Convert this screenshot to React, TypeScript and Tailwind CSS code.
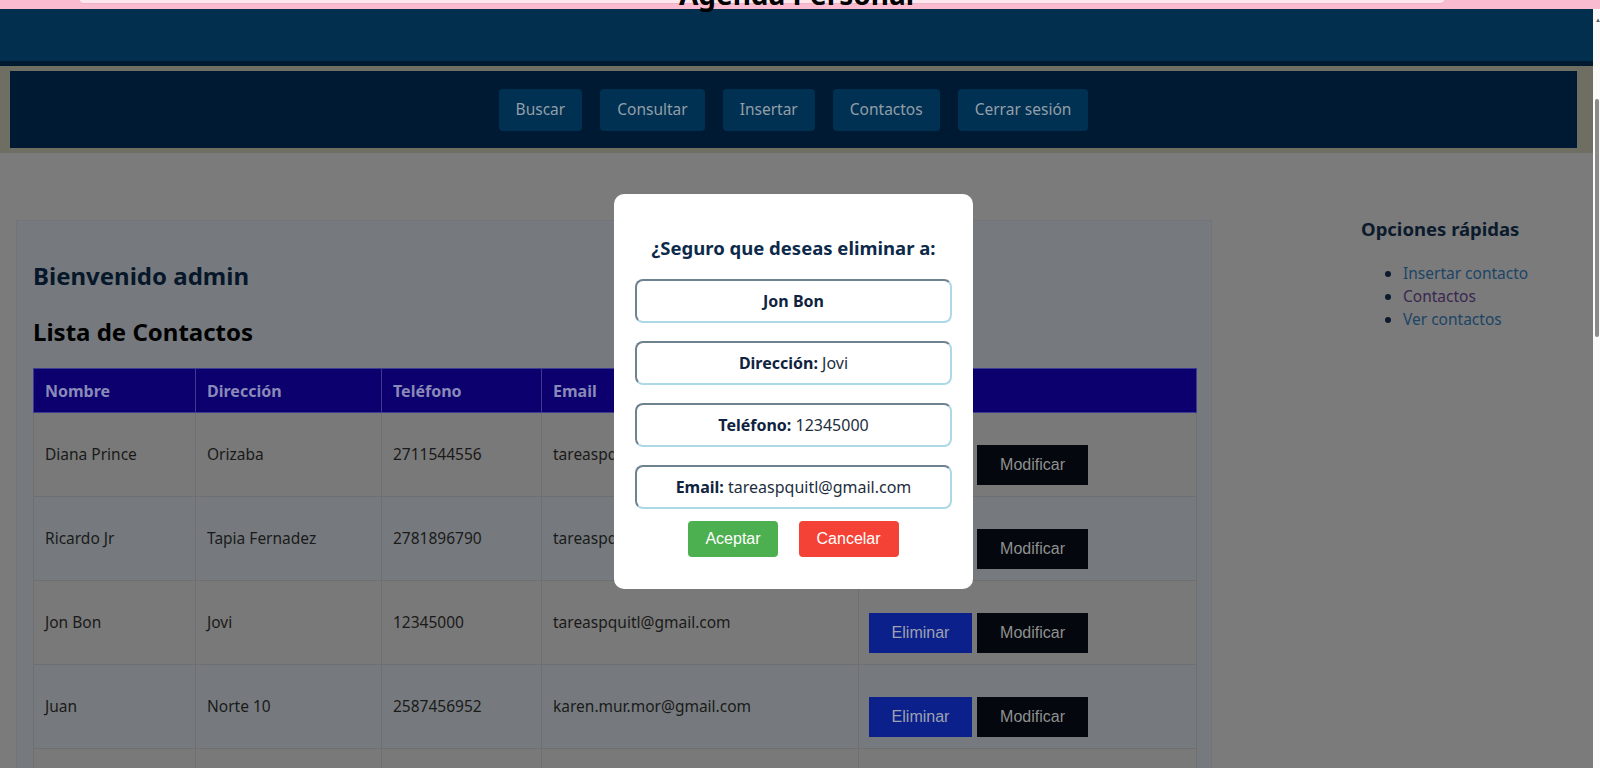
import React from "react";

const navItems = ["Buscar", "Consultar", "Insertar", "Contactos", "Cerrar sesión"];

const contactos = [
  { nombre: "Diana Prince", direccion: "Orizaba", telefono: "2711544556", email: "tareaspquitl@gmail.com" },
  { nombre: "Ricardo Jr", direccion: "Tapia Fernadez", telefono: "2781896790", email: "tareaspquitl@gmail.com" },
  { nombre: "Jon Bon", direccion: "Jovi", telefono: "12345000", email: "tareaspquitl@gmail.com" },
  { nombre: "Juan", direccion: "Norte 10", telefono: "2587456952", email: "karen.mur.mor@gmail.com" },
  { nombre: "Luis", direccion: "Centro", telefono: "2721234567", email: "luis@gmail.com" },
];

const opciones = [
  { label: "Insertar contacto", visited: false },
  { label: "Contactos", visited: true },
  { label: "Ver contactos", visited: false },
];

const boxClass =
  "h-[44px] flex items-center justify-center rounded-[8px] border-2 border-t-[#6f8290] border-l-[#6f8290] border-b-[#add8e6] border-r-[#add8e6]";

const App = () => {
  return (
    <div className="h-[768px] w-[1600px] overflow-hidden flex flex-col bg-[#7b7b7b] font-['Noto_Sans',sans-serif]">
      {/* browser chrome strip */}
      <div className="h-[9px] bg-[#f8bbd0] relative shrink-0">
        <div className="ml-[80px] w-[1364px] h-[4px] bg-[#fde6ee] rounded-b-[6px] border-b border-[#efb3c6]" />
      </div>

      <div className="flex flex-1 min-h-0">
        <div className="flex-1 relative">
          {/* header */}
          <header className="h-[52px] bg-[#022f4e] flex justify-center">
            <h1 className="relative z-10 -mt-[29px] text-[28px] leading-none font-bold text-black">
              Agenda Personal
            </h1>
          </header>
          <div className="h-[5px] bg-[#001b30]" />

          {/* nav */}
          <div className="bg-[#6f6e63] pl-[10px] pr-[16px] py-[5px]">
            <nav className="bg-[#001a34] h-[77px] flex items-center justify-center gap-[18px]">
              {navItems.map((item) => (
                <button
                  key={item}
                  className="h-[42px] px-[17px] rounded-[4px] bg-[#003152] text-[#939ea8] text-[15.5px]"
                >
                  {item}
                </button>
              ))}
            </nav>
          </div>

          {/* body */}
          <div className="flex pt-[67px]">
            <main className="ml-[16px] w-[1196px] bg-[#767a7e] border border-[#717579] pt-[39px] px-[16px]">
              <h2 className="text-[24px] leading-[32px] font-bold text-[#07172a]">Bienvenido admin</h2>
              <h2 className="mt-[24px] text-[24px] leading-[32px] font-bold text-black">Lista de Contactos</h2>
              <table className="mt-[20px] w-[1164px] border-collapse text-[15.5px] text-[#1a1a1a]">
                <thead>
                  <tr className="bg-[#0b006e] text-[#8a8ab8] text-left text-[16px]">
                    <th className="w-[162px] h-[44px] px-[11px] font-bold border border-[#3b3b94]">Nombre</th>
                    <th className="w-[186px] px-[11px] font-bold border border-[#3b3b94]">Dirección</th>
                    <th className="w-[160px] px-[11px] font-bold border border-[#3b3b94]">Teléfono</th>
                    <th className="w-[317px] px-[11px] font-bold border border-[#3b3b94]">Email</th>
                    <th className="px-[11px] border border-[#3b3b94]" />
                  </tr>
                </thead>
                <tbody>
                  {contactos.map((c, i) => (
                    <tr key={i} className={i % 2 === 0 ? "bg-[#797979]" : "bg-[#767a7e]"}>
                      <td className="h-[84px] px-[11px] border border-[#6e6f70] align-middle">{c.nombre}</td>
                      <td className="px-[11px] border border-[#6e6f70] align-middle">{c.direccion}</td>
                      <td className="px-[11px] border border-[#6e6f70] align-middle">{c.telefono}</td>
                      <td className="px-[11px] border border-[#6e6f70] align-middle">{c.email}</td>
                      <td className="pl-[10px] pt-[20px] border border-[#6e6f70] align-middle">
                        <div className="flex gap-[5px] font-['Liberation_Sans',Arial,sans-serif] text-[16px]">
                          <button className="h-[40px] w-[103px] bg-[#0b208a] text-[#9ea2b0]">Eliminar</button>
                          <button className="h-[40px] w-[111px] bg-[#04070d] text-[#909090]">Modificar</button>
                        </div>
                      </td>
                    </tr>
                  ))}
                </tbody>
              </table>
            </main>

            <aside className="pl-[149px] -mt-[3px]">
              <h3 className="text-[18.5px] leading-[24px] font-bold text-[#0b1a2c]">Opciones rápidas</h3>
              <ul className="mt-[21px] pl-[42px] list-disc text-[15.5px] leading-[23px] marker:text-[#0b1a2c]">
                {opciones.map((o) => (
                  <li key={o.label} className={o.visited ? "text-[#3a2650]" : "text-[#1b4466]"}>
                    {o.label}
                  </li>
                ))}
              </ul>
            </aside>
          </div>

          {/* modal */}
          <div className="fixed top-[9px] left-0 right-[7px] bottom-0 pt-[6px] pr-[6px] flex items-center justify-center z-20">
            <div className="w-[359px] bg-white rounded-[10px] pt-[42px] pb-[32px] px-[21px] text-center">
              <p className="text-[18.5px] leading-[24px] font-bold text-[#0d2a4a]">¿Seguro que deseas eliminar a:</p>
              <div className="mt-[19px] flex flex-col gap-[18px] text-[16px] text-[#1e2e3e]">
                <div className={boxClass}>
                  <span className="font-bold text-[#0f2340]">Jon Bon</span>
                </div>
                <div className={boxClass}>
                  <span className="font-bold text-[#0f2340]">Dirección:</span>&nbsp;Jovi
                </div>
                <div className={boxClass}>
                  <span className="font-bold text-[#0f2340]">Teléfono:</span>&nbsp;12345000
                </div>
                <div className={boxClass}>
                  <span className="font-bold text-[#0f2340]">Email:</span>&nbsp;tareaspquitl@gmail.com
                </div>
              </div>
              <div className="mt-[12px] flex justify-center gap-[21px] font-['Liberation_Sans',Arial,sans-serif] text-[16px] text-white">
                <button className="h-[36px] px-[17px] rounded-[4px] bg-[#4caf50]">Aceptar</button>
                <button className="h-[36px] px-[18px] rounded-[4px] bg-[#f44336]">Cancelar</button>
              </div>
            </div>
          </div>
        </div>

        {/* scrollbar */}
        <div className="w-[7px] bg-[#fafafa] relative shrink-0">
          <div className="mt-[8px] ml-[2px] text-[6px] leading-none text-[#606060]">▲</div>
          <div className="mt-[76px] ml-[2px] w-[4px] h-[238px] rounded-full bg-[#8a8a8a]" />
        </div>
      </div>
    </div>
  );
};

export default App;
